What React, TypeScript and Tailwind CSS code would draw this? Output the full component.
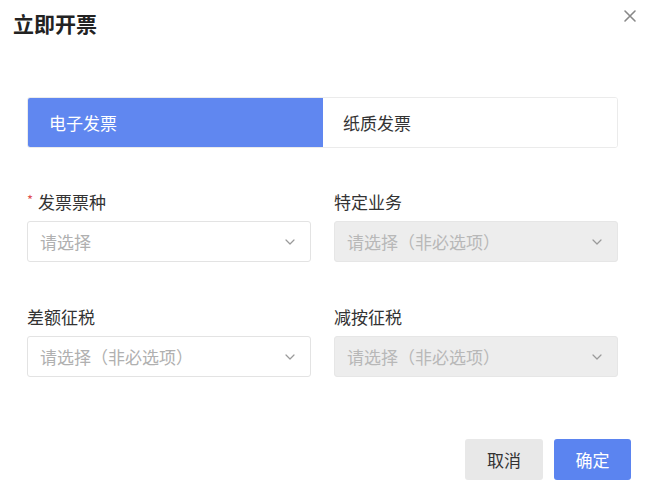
import React, { useState } from "react";

const font = { fontFamily: '"Noto Sans CJK SC", "Noto Sans", sans-serif' };

const Chevron = () => (
  <svg width="12" height="12" viewBox="0 0 12 12" fill="none">
    <path d="M2 4l4 4 4-4" stroke="#9a9a9a" strokeWidth="1.2" strokeLinecap="round" strokeLinejoin="round" />
  </svg>
);

interface FieldProps {
  label: string;
  placeholder: string;
  required?: boolean;
  disabled?: boolean;
}

const Field = ({ label, placeholder, required, disabled }: FieldProps) => (
  <div className="flex flex-col">
    <div className="flex items-center h-[20px] text-[17px] text-[#333] leading-none">
      {required && <span className="text-[#e05050] text-[13px] mr-[5px] -mt-[4px]">*</span>}
      {label}
    </div>
    <div
      className={
        disabled
          ? "mt-[10px] h-[41px] flex items-center justify-between pl-[12px] pr-[14px] rounded-[3px] border border-[#e6e6e6] bg-[#ededed]"
          : "mt-[10px] h-[41px] flex items-center justify-between pl-[12px] pr-[14px] rounded-[3px] border border-[#e3e3e3] bg-white"
      }
    >
      <span className={disabled ? "text-[17px] text-[#b8b8b8]" : "text-[17px] text-[#b0b0b0]"}>{placeholder}</span>
      <Chevron />
    </div>
  </div>
);

export default function App() {
  const [tab, setTab] = useState<"e" | "p">("e");

  return (
    <div className="w-[651px] h-[490px] bg-white relative" style={font}>
      <div className="flex items-start justify-between pl-[13px] pr-[14px] pt-[8px]">
        <h1 className="text-[21px] font-bold text-[#222] leading-[30px]">立即开票</h1>
        <button className="text-[#888] mt-[1px]">
          <svg width="14" height="14" viewBox="0 0 14 14" fill="none">
            <path d="M2 2l10 10M12 2L2 12" stroke="#888" strokeWidth="1.6" strokeLinecap="round" />
          </svg>
        </button>
      </div>

      <div className="pl-[27px] pr-[33px] pt-[59px]">
        <div className="flex h-[51px] rounded-[3px] border border-[#ebebeb] overflow-hidden">
          <button
            onClick={() => setTab("e")}
            className={
              tab === "e"
                ? "w-[295px] flex items-center pl-[21px] text-[17px] bg-[#6087f0] text-white"
                : "w-[295px] flex items-center pl-[21px] text-[17px] bg-white text-[#333]"
            }
          >
            电子发票
          </button>
          <button
            onClick={() => setTab("p")}
            className={
              tab === "p"
                ? "flex-1 flex items-center pl-[20px] text-[17px] bg-[#6087f0] text-white"
                : "flex-1 flex items-center pl-[20px] text-[17px] bg-white text-[#333]"
            }
          >
            纸质发票
          </button>
        </div>

        <div className="grid grid-cols-2 gap-x-[23px] gap-y-[44px] mt-[43px]">
          <Field label="发票票种" placeholder="请选择" required />
          <Field label="特定业务" placeholder="请选择（非必选项）" disabled />
          <Field label="差额征税" placeholder="请选择（非必选项）" />
          <Field label="减按征税" placeholder="请选择（非必选项）" disabled />
        </div>
      </div>

      <div className="flex justify-end gap-[11px] pr-[20px] mt-[62px]">
        <button className="w-[78px] h-[41px] rounded-[3px] bg-[#e8e8e8] text-[17px] text-[#333]">取消</button>
        <button className="w-[77px] h-[41px] rounded-[3px] bg-[#5b84f0] text-[17px] text-white">确定</button>
      </div>
    </div>
  );
}
